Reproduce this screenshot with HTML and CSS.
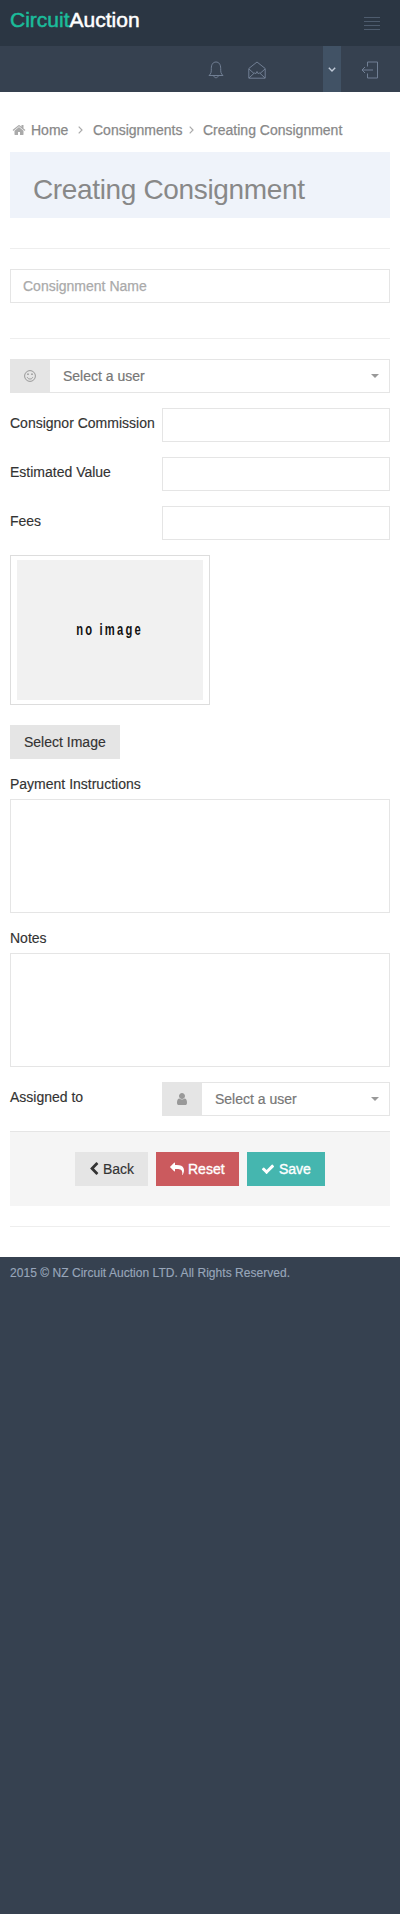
FILE: index.html
```html
<!DOCTYPE html>
<html lang="en">
<head>
<meta charset="utf-8">
<title>Creating Consignment</title>
<link rel="stylesheet" href="styles.css">
</head>
<body>
<header class="top">
  <div class="logo"><span>Circuit</span>Auction</div>
  <svg class="burger" width="16" height="13" viewBox="0 0 16 13"><path d="M0 .5h16M0 4.500h16M0 8.500h16M0 12.500h16"/></svg>
</header>
<nav class="bar">
  <svg class="line-icon bell" width="16" height="18" viewBox="0 0 16 18"><path d="M1 14.500C3.300 12.500 3.300 11 3.300 7.500C3.300 3.500 5 1 8 1s4.700 2.500 4.700 6.500c0 3.500 0 5 2.300 7zM5.700 14.500c.3 3 4.300 3 4.600 0"/></svg>
  <svg class="line-icon mail" width="18" height="18" viewBox="0 0 18 18"><path d="M.8 7.500L9 1l8.200 6.500v9.700H.8zM1 8l5 4.500M17 8l-5 4.500M1 17l5.500-5.200L7.500 13 9 10.500l1.500 2.500 1-1.200L17 17"/></svg>
  <div class="drop"><svg width="8" height="5" viewBox="0 0 8 5"><path d="M.8.800L4 4 7.200.800"/></svg></div>
  <svg class="line-icon exit" width="18" height="18" viewBox="0 0 18 18"><path d="M6.500 5.500V1h10v16h-10v-4.500M12 9H1M4 6L1 9l3 3"/></svg>
</nav>
<main class="page">
  <div class="crumbs">
    <svg class="fa" viewBox="0 0 1792 1792"><path d="M1472 992v480q0 26-19 45t-45 19h-384v-384h-256v384h-384q-26 0-45-19t-19-45v-480q0-1 .5-3t.5-3l575-474 575 474q1 2 1 6zm223-69l-62 74q-8 9-21 11h-3q-13 0-21-7l-692-577-692 577q-12 8-24 7-13-2-21-11l-62-74q-8-10-7-23.500t11-21.500l719-599q32-26 76-26t76 26l244 204v-195q0-14 9-23t23-9h192q14 0 23 9t9 23v408l219 182q10 8 11 21.500t-7 23.500z"/></svg>
    <span class="home">Home</span>
    <svg class="angle" width="5" height="8" viewBox="0 0 5 8"><path d="M.7.600L4 4 .7 7.400"/></svg>
    <span class="mid">Consignments</span>
    <svg class="angle" width="5" height="8" viewBox="0 0 5 8"><path d="M.7.600L4 4 .7 7.400"/></svg>
    <span class="last">Creating Consignment</span>
  </div>
  <h1 class="title">Creating Consignment</h1>
  <hr class="rule rule-title">
  <div class="field name">Consignment Name</div>
  <hr class="rule rule-name">
  <div class="select">
    <div class="addon"><svg class="smile" width="12" height="12" viewBox="0 0 12 12"><circle cx="6" cy="6" r="5.400"/><path d="M3.300 7.300c.8 2.300 4.600 2.300 5.400 0"/><circle class="eye" cx="4" cy="4.200" r=".85"/><circle class="eye" cx="8" cy="4.200" r=".85"/></svg></div>
    <div class="choice">Select a user<i class="caret"></i></div>
  </div>
  <div class="row"><label>Consignor Commission</label><div class="field"></div></div>
  <div class="row"><label>Estimated Value</label><div class="field"></div></div>
  <div class="row"><label>Fees</label><div class="field"></div></div>
  <div class="thumb"><div class="noimage"><span>no image</span></div></div>
  <div class="btn pick">Select Image</div>
  <label class="above">Payment Instructions</label>
  <div class="area"></div>
  <label class="above">Notes</label>
  <div class="area"></div>
  <div class="row"><label>Assigned to</label>
    <div class="select narrow">
      <div class="addon"><svg class="fa" viewBox="0 0 1792 1792"><path d="M1536 1399q0 109-62.500 187t-150.500 78h-854q-88 0-150.500-78t-62.500-187q0-85 8.500-160.500t31.500-152 58.500-131 94-89 134.500-34.500q131 128 313 128t313-128q76 0 134.500 34.500t94 89 58.500 131 31.500 152 8.500 160.500zm-256-887q0 159-112.500 271.500t-271.500 112.500-271.500-112.500-112.500-271.500 112.500-271.500 271.500-112.500 271.500 112.500 112.500 271.500z"/></svg></div>
      <div class="choice">Select a user<i class="caret"></i></div>
    </div>
  </div>
  <div class="actions">
    <div class="btn back"><svg class="fa slim" viewBox="256 0 1280 1792"><path d="M1427 301l-531 531 531 531q19 19 19 45t-19 45l-166 166q-19 19-45 19t-45-19l-742-742q-19-19-19-45t19-45l742-742q19-19 45-19t45 19l166 166q19 19 19 45t-19 45z"/></svg><span>Back</span></div>
    <div class="btn reset"><svg class="fa" viewBox="0 0 1792 1792"><path d="M1792 1120q0 166-127 451-3 7-10.500 24t-13.500 30-13 22q-12 17-28 17-15 0-23.500-10t-8.500-25q0-9 2.500-26.500t2.500-23.500q5-68 5-123 0-101-17.500-181t-48.500-138.500-80-101-105.500-69.500-133-42.500-154-21.500-175.500-6h-224v256q0 26-19 45t-45 19-45-19l-512-512q-19-19-19-45t19-45l512-512q19-19 45-19t45 19 19 45v256h224q713 0 875 403 53 134 53 333z"/></svg><span>Reset</span></div>
    <div class="btn save"><svg class="fa" viewBox="0 0 1792 1792"><path d="M1671 566q0 40-28 68l-724 724-136 136q-28 28-68 28t-68-28l-136-136-362-362q-28-28-28-68t28-68l136-136q28-28 68-28t68 28l294 295 656-657q28-28 68-28t68 28l136 136q28 28 28 68z"/></svg><span>Save</span></div>
  </div>
  <hr class="rule rule-end">
</main>
<footer class="foot">2015 © NZ Circuit Auction LTD. All Rights Reserved.</footer>
</body>
</html>
```
FILE: styles.css
```css
* { box-sizing: border-box; }
body {
  margin: 0;
  background: #364150;
  color: #333;
  font: 14px/20px "Liberation Sans", Arial, sans-serif;
}
svg { display: block; flex: none; fill: none; }
.fa { width: 14px; height: 14px; fill: currentColor; }
.fa.slim { width: 10px; }
.top {
  height: 46px;
  padding: 0 20px 0 10px;
  background: #2b3643;
  display: flex;
  justify-content: space-between;
}
.logo {
  padding-top: 7px;
  font-size: 21px;
  line-height: 26px;
  color: #fff;
  -webkit-text-stroke: 0.5px currentColor;
}
.logo span { color: #1bbc9b; }
.burger { margin-top: 17px; stroke: #4e5c6e; }
.bar { display: flex; height: 46px; }
.line-icon { stroke: #717f94; stroke-linejoin: round; }
.bell { margin: 15px 0 0 208px; }
.mail { margin: 15px 0 0 24px; }
.drop {
  width: 18px;
  height: 46px;
  margin-left: 57px;
  background: #415265;
  display: flex;
  align-items: center;
  justify-content: center;
}
.drop svg { stroke: #c0cad8; stroke-width: 1.4; }
.exit { margin: 15px 0 0 20px; }
.page {
  height: 1165px;
  padding: 28px 10px 0;
  background: #fff;
}
.crumbs {
  display: flex;
  align-items: center;
  height: 20px;
  margin: 0 0 12px 2px;
  color: #888;
  -webkit-text-stroke: 0.25px currentColor;
}
.crumbs .fa { color: #aaa; -webkit-text-stroke: 0; }
.home { width: 38px; margin: 0 9px 0 5px; }
.angle { stroke: #aaa; stroke-width: 1.2; }
.mid { width: 90px; margin: 0 6px 0 10px; white-space: nowrap; }
.last { margin-left: 9px; white-space: nowrap; }
.title {
  height: 66px;
  margin: 0;
  padding: 20px 23px 0;
  background: #eff3fa;
  color: #888;
  font-size: 28px;
  font-weight: 400;
  line-height: 36px;
  letter-spacing: -0.35px;
  white-space: nowrap;
}
.rule { height: 1px; margin: 0; border: 0; background: #eee; }
.rule-title { margin: 30px 0 20px; }
.rule-name { margin: 35px 0 20px; }
.field {
  height: 34px;
  border: 1px solid #e5e5e5;
  background: #fff;
}
.name { padding: 6px 12px; color: #aaa; -webkit-text-stroke: 0.25px currentColor; }
.select { display: flex; height: 34px; }
.addon {
  width: 40px;
  background: #e5e5e5;
  color: #999;
  display: flex;
  align-items: center;
  justify-content: center;
}
.smile { stroke: #999; stroke-width: 1; }
.smile .eye { stroke: none; fill: #999; }
.choice {
  flex: 1;
  display: flex;
  align-items: center;
  justify-content: space-between;
  padding: 0 10px 0 13px;
  border: 1px solid #e5e5e5;
  border-left: 0;
  color: #777;
  -webkit-text-stroke: 0.2px currentColor;
}
.caret { border: 4px solid transparent; border-top-color: #999; border-bottom: 0; }
.row {
  display: grid;
  grid-template-columns: 152px 228px;
  height: 34px;
  margin-top: 15px;
}
.row label { padding-top: 5px; white-space: nowrap; }
.row label, .above, .pick, .back { -webkit-text-stroke: 0.15px currentColor; }
.thumb {
  width: 200px;
  height: 150px;
  margin: 15px 0 20px;
  padding: 4px 6px;
  border: 1px solid #ddd;
}
.noimage {
  height: 140px;
  background: #f1f1f1;
  color: #111;
  display: flex;
  align-items: center;
  justify-content: center;
}
.noimage span {
  font: bold 17px/20px "Liberation Sans", Arial, sans-serif;
  letter-spacing: 3.3px;
  white-space: nowrap;
  transform: scaleX(0.66);
}
.btn {
  display: flex;
  align-items: center;
  height: 34px;
  padding: 0 14px;
  background: #e5e5e5;
  white-space: nowrap;
}
.pick { width: 110px; margin-bottom: 15px; }
.above { display: block; height: 25px; }
.area { height: 114px; margin-bottom: 15px; border: 1px solid #e5e5e5; }
.actions {
  display: flex;
  justify-content: center;
  gap: 8px;
  height: 75px;
  margin-top: 15px;
  padding-top: 20px;
  border-top: 1px solid #e5e5e5;
  background: #f5f5f5;
}
.actions .btn { gap: 4px; }
.back { width: 73px; }
.reset, .save { color: #fff; -webkit-text-stroke: 0.35px currentColor; }
.actions .fa { -webkit-text-stroke: 0; }
.reset { width: 83px; background: #cb5a5e; }
.save { width: 78px; background: #45b6af; }
.rule-end { margin-top: 20px; }
.foot {
  padding: 6px 10px;
  color: #98a6ba;
  font-size: 12px;
  letter-spacing: 0.04px;
  white-space: nowrap;
  -webkit-text-stroke: 0.15px currentColor;
}
```
